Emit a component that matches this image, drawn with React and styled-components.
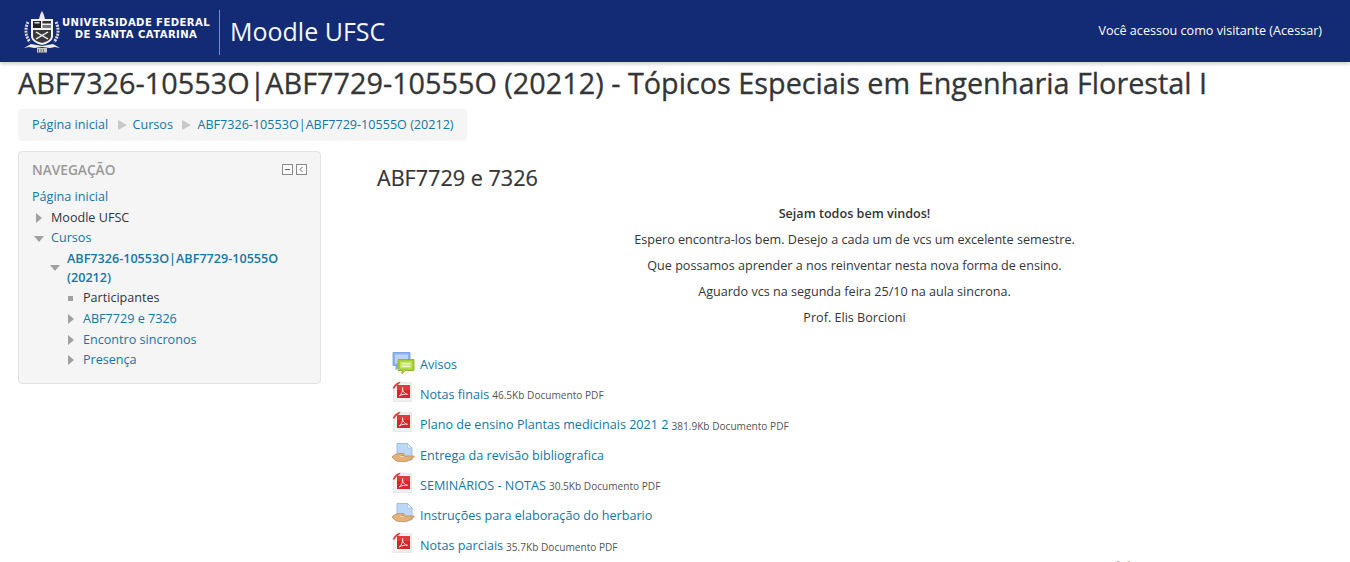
import React from 'react';
import styled, { createGlobalStyle } from 'styled-components';

const GlobalStyle = createGlobalStyle`
  html, body {
    margin: 0;
    padding: 0;
    background: #fff;
    height: 562px;
    overflow: hidden;
  }
  body {
    font-family: "Open Sans", "Liberation Sans", sans-serif;
    font-size: 12.6px;
    color: #333537;
  }
  * { box-sizing: border-box; }
`;

const Page = styled.div`
  height: 562px;
  overflow: hidden;
`;

const Header = styled.header`
  height: 62px;
  background: #132a74;
  box-shadow: 0 2px 4px rgba(0, 0, 0, 0.2);
  display: flex;
  align-items: center;
  padding: 0 28px 0 24px;
  color: #fff;
`;

const Brand = styled.div`
  display: flex;
  align-items: center;
  height: 45px;
  margin-top: 2px;
`;

const UniName = styled.div`
  font-family: "DejaVu Sans", sans-serif;
  font-weight: 700;
  font-size: 10.1px;
  line-height: 12px;
  letter-spacing: 0.4px;
  text-align: center;
  margin-left: 2px;
  margin-top: -6px;
  width: 148px;
  white-space: nowrap;
`;

const Divider = styled.div`
  width: 1px;
  height: 45px;
  background: #4a9fd6;
  margin: 0 10px 0 9px;
`;

const SiteName = styled.div`
  font-size: 25px;
  line-height: 30px;
  margin-top: -2px;
  color: #f4f6fb;
`;

const LoginInfo = styled.div`
  margin-left: auto;
  font-size: 12.6px;
  margin-top: -2px;
`;

const Content = styled.main`
  padding: 0 18px;
`;

const PageTitle = styled.h1`
  margin: 3px 0 0;
  font-size: 28.8px;
  line-height: 36px;
  font-weight: 400;
  -webkit-text-stroke: 0.3px #333537;
  color: #333537;
  white-space: nowrap;
`;

const Breadcrumb = styled.nav`
  display: inline-flex;
  align-items: center;
  height: 32px;
  margin-top: 8px;
  padding: 0 13px 1px 14px;
  background: #f5f5f5;
  border-radius: 4px;
  vertical-align: top;
`;

const Crumb = styled.a`
  color: #1177a5;
`;

const CrumbSep = styled.span`
  width: 0;
  height: 0;
  margin: 0 6px 0 9.5px;
  border-style: solid;
  border-width: 5px 0 5px 9px;
  border-color: transparent transparent transparent #c8c8c8;
`;

const Columns = styled.div`
  display: flex;
  align-items: flex-start;
  margin-top: 10px;
`;

const Block = styled.aside`
  width: 303px;
  height: 233px;
  flex: none;
  background: #f5f5f5;
  border: 1px solid #e3e3e3;
  border-radius: 4px;
  padding: 7px 13px 0;
`;

const BlockHead = styled.div`
  display: flex;
  align-items: center;
  justify-content: space-between;
  height: 20px;
  margin-bottom: 8px;
`;

const BlockTitle = styled.div`
  font-size: 13.7px;
  font-weight: 600;
  color: #999;
`;

const BlockControls = styled.div`
  display: flex;
  gap: 3px;
`;

const Ctrl = styled.span`
  width: 11px;
  height: 11px;
  border: 1px solid #8a8a8a;
  background: #fafafa;
  display: flex;
  align-items: center;
  justify-content: center;
`;

const Tree = styled.ul`
  list-style: none;
  margin: 0;
  padding: 0;
`;

const TreeItem = styled.li`
  display: flex;
  align-items: ${p => (p.$wrap ? 'flex-start' : 'center')};
  min-height: 20.7px;
  line-height: 18.5px;
  padding-left: ${p => p.$indent || 0}px;
  padding-top: ${p => (p.$wrap ? 1 : 0)}px;
  padding-bottom: ${p => (p.$wrap ? 1 : 0)}px;
`;

const Marker = styled.span`
  flex: none;
  width: 19px;
  height: 18px;
  display: flex;
  align-items: center;
  margin-top: ${p => (p.$wrap ? 9 : 0)}px;
`;

const ArrowRight = styled.span`
  width: 0;
  height: 0;
  margin-left: 4px;
  border-style: solid;
  border-width: 5px 0 5px 6px;
  border-color: transparent transparent transparent #a0a0a0;
`;

const ArrowDown = styled.span`
  width: 0;
  height: 0;
  margin-left: 2px;
  border-style: solid;
  border-width: 6px 5px 0 5px;
  border-color: #a0a0a0 transparent transparent transparent;
`;

const Square = styled.span`
  width: 5px;
  height: 5px;
  margin-left: 4px;
  background: #a0a0a0;
`;

const TreeLink = styled.a`
  color: ${p => (p.$plain ? '#333537' : '#1177a5')};
  font-weight: ${p => (p.$bold ? 600 : 400)};
`;

const Main = styled.section`
  flex: 1;
  min-width: 0;
  padding-left: 56px;
`;

const SectionTitle = styled.h3`
  margin: 13px 0 0;
  font-size: 21.6px;
  line-height: 28px;
  font-weight: 400;
  -webkit-text-stroke: 0.2px #333537;
  color: #333537;
`;

const Summary = styled.div`
  margin-top: 9px;
  text-align: center;
`;

const SummaryLine = styled.p`
  margin: 0;
  line-height: 26px;
  font-weight: ${p => (p.$bold ? 600 : 400)};
`;

const Activities = styled.ul`
  list-style: none;
  margin: 18px 0 0;
  padding: 0 0 0 14px;
`;

const Activity = styled.li`
  display: flex;
  align-items: center;
  height: 30.3px;
  white-space: nowrap;
`;

const ActivityIcon = styled.span`
  flex: none;
  width: 24px;
  height: 24px;
  margin-right: 5px;
  margin-top: -3px;
  display: block;
`;

const ActivityLink = styled.a`
  color: #1177a5;
`;

const ActivityMeta = styled.span`
  font-size: 10.1px;
  color: #555;
  margin-left: 3px;
  margin-top: 2px;
`;

const NextLabel = styled.div`
  margin: -4px 0 0 638px;
  font-size: 20px;
  line-height: 24px;
  color: #aaa;
  white-space: nowrap;
`;

function Crest() {
  return (
    <svg width="36" height="42" viewBox="0 0 36 42" style={{ flex: 'none' }}>
      <path d="M18 0l1.6 3 1.4 5h-6l1.4-5z" fill="#e8e8e8" />
      <path d="M4 11C1 17 1 25 6 31" fill="none" stroke="#ddd" strokeWidth="3" strokeDasharray="2 1" />
      <path d="M32 11c3 6 3 14-2 20" fill="none" stroke="#ddd" strokeWidth="3" strokeDasharray="2 1" />
      <path d="M7 8h22v17c0 5-6 8-11 9-5-1-11-4-11-9z" fill="#f2f2f2" />
      <rect x="9" y="10" width="8" height="7" fill="#222" />
      <rect x="10.5" y="11" width="5" height="1.5" fill="#ddd" />
      <rect x="18.5" y="10" width="8.5" height="2.5" fill="#333" />
      <rect x="18.5" y="14" width="8.5" height="3" fill="#777" />
      <path d="M9 19h18v6c0 4-5 6-9 7-4-1-9-3-9-7z" fill="#3a3a3a" />
      <path d="M12 21l12 7M24 21l-12 7" stroke="#fff" strokeWidth="1.4" />
      <path d="M0 37l7-4 11 2 11-2 7 4-5-1-5 1-8-1-8 1-5-1z" fill="#eee" />
      <rect x="13" y="37" width="10" height="4.5" fill="#c8c8c8" />
      <path d="M14.5 38v3M17 38v3M19.5 38v3" stroke="#444" strokeWidth="0.7" />
    </svg>
  );
}

function PdfIcon() {
  return (
    <svg width="24" height="24" viewBox="0 0 24 24">
      <path d="M2 7l7-6h12v20H2z" fill="#e9e9e9" />
      <path d="M3.5 8l6-5.5h10v17h-16z" fill="#f4f4f4" />
      <rect x="6" y="4" width="13" height="13" fill="#d8252b" />
      <path d="M6 4h13v5H6z" fill="#e8484b" opacity="0.6" />
      <path d="M1.5 7.5C3 4 5.5 1.5 9.5 0.5 9 2 8 3 6.5 4 5 5 4 6 3.5 7.5z" fill="#e33a3d" />
      <path d="M8 15c2.5-1.500 4-5 3.600-8.500-.4 3 1.500 6 5 6.800-3-.4-6 .2-8.600 1.700z" fill="none" stroke="#fbe1e1" strokeWidth="1" />
    </svg>
  );
}

function ForumIcon() {
  return (
    <svg width="24" height="24" viewBox="0 0 24 24">
      <path d="M2 1.5h17v13H9l-4 4v-4H2z" fill="#8db4f0" stroke="#6f97e2" strokeWidth="0.8" />
      <path d="M4 3.5h13v9H4z" fill="#bdd3f7" />
      <path d="M7 8.5h16v11H14l-3 3.500v-3.500H7z" fill="#a4cf2f" stroke="#86b41c" strokeWidth="0.8" />
      <path d="M9 10.5h12v7H9z" fill="#c3e266" />
      <path d="M11 12.8h8M11 15.4h8" stroke="#f2f9d8" strokeWidth="1.3" />
    </svg>
  );
}

function AssignIcon() {
  return (
    <svg width="24" height="24" viewBox="0 0 24 24">
      <path d="M6 1.5h10.500l4.500 4.500v12H6z" fill="#bcd7f7" stroke="#8fb5e6" strokeWidth="0.8" />
      <path d="M16.5 1.5V6H21z" fill="#eaf3fc" stroke="#8fb5e6" strokeWidth="0.5" />
      <path d="M1 15c2-2.500 5-3.500 8-3.500h3c1.500 0 2 1.500 .5 2l-2 .5h12c.8 0 1 .8.3 1.300l-5 3.200c-1 .6-2 1-3.300 1H8c-2.500 0-5-2-7-4.500z" fill="#e3b27a" stroke="#b98447" strokeWidth="0.7" />
      <path d="M9 14.5h4" stroke="#f4d7ad" strokeWidth="1" />
    </svg>
  );
}

const activities = [
  { icon: ForumIcon, name: 'Avisos' },
  { icon: PdfIcon, name: 'Notas finais', meta: '46.5Kb Documento PDF' },
  { icon: PdfIcon, name: 'Plano de ensino Plantas medicinais 2021 2', meta: '381.9Kb Documento PDF' },
  { icon: AssignIcon, name: 'Entrega da revisão bibliografica' },
  { icon: PdfIcon, name: 'SEMINÁRIOS - NOTAS', meta: '30.5Kb Documento PDF' },
  { icon: AssignIcon, name: 'Instruções para elaboração do herbario' },
  { icon: PdfIcon, name: 'Notas parciais', meta: '35.7Kb Documento PDF' },
];

const COURSE = 'ABF7326-10553O|ABF7729-10555O (20212)';

export default function App() {
  return (
    <Page>
      <GlobalStyle />
      <Header>
        <Brand>
          <Crest />
          <UniName>
            UNIVERSIDADE FEDERAL
            <br />
            DE SANTA CATARINA
          </UniName>
          <Divider />
          <SiteName>Moodle UFSC</SiteName>
        </Brand>
        <LoginInfo>Você acessou como visitante (Acessar)</LoginInfo>
      </Header>
      <Content>
        <PageTitle>{COURSE} - Tópicos Especiais em Engenharia Florestal I</PageTitle>
        <Breadcrumb>
          <Crumb>Página inicial</Crumb>
          <CrumbSep />
          <Crumb>Cursos</Crumb>
          <CrumbSep />
          <Crumb>{COURSE}</Crumb>
        </Breadcrumb>
        <Columns>
          <Block>
            <BlockHead>
              <BlockTitle>NAVEGAÇÃO</BlockTitle>
              <BlockControls>
                <Ctrl>
                  <svg width="7" height="7" viewBox="0 0 7 7"><path d="M1 3.5h5" stroke="#666" strokeWidth="1" /></svg>
                </Ctrl>
                <Ctrl>
                  <svg width="7" height="7" viewBox="0 0 7 7"><path d="M4.5 1L2 3.5 4.5 6" fill="none" stroke="#666" strokeWidth="1" /></svg>
                </Ctrl>
              </BlockControls>
            </BlockHead>
            <Tree>
              <TreeItem><TreeLink>Página inicial</TreeLink></TreeItem>
              <TreeItem><Marker><ArrowRight /></Marker><TreeLink $plain>Moodle UFSC</TreeLink></TreeItem>
              <TreeItem><Marker><ArrowDown /></Marker><TreeLink>Cursos</TreeLink></TreeItem>
              <TreeItem $indent={16} $wrap><Marker $wrap><ArrowDown /></Marker><TreeLink $bold>{COURSE}</TreeLink></TreeItem>
              <TreeItem $indent={32}><Marker><Square /></Marker><TreeLink $plain>Participantes</TreeLink></TreeItem>
              <TreeItem $indent={32}><Marker><ArrowRight /></Marker><TreeLink>ABF7729 e 7326</TreeLink></TreeItem>
              <TreeItem $indent={32}><Marker><ArrowRight /></Marker><TreeLink>Encontro sincronos</TreeLink></TreeItem>
              <TreeItem $indent={32}><Marker><ArrowRight /></Marker><TreeLink>Presença</TreeLink></TreeItem>
            </Tree>
          </Block>
          <Main>
            <SectionTitle>ABF7729 e 7326</SectionTitle>
            <Summary>
              <SummaryLine $bold>Sejam todos bem vindos!</SummaryLine>
              <SummaryLine>Espero encontra-los bem. Desejo a cada um de vcs um excelente semestre.</SummaryLine>
              <SummaryLine>Que possamos aprender a nos reinventar nesta nova forma de ensino.</SummaryLine>
              <SummaryLine>Aguardo vcs na segunda feira 25/10 na aula sincrona.</SummaryLine>
              <SummaryLine>Prof. Elis Borcioni</SummaryLine>
            </Summary>
            <Activities>
              {activities.map(a => (
                <Activity key={a.name}>
                  <ActivityIcon><a.icon /></ActivityIcon>
                  <ActivityLink>{a.name}</ActivityLink>
                  {a.meta && <ActivityMeta>{a.meta}</ActivityMeta>}
                </Activity>
              ))}
            </Activities>
            <NextLabel>Artigos e Vídeos</NextLabel>
          </Main>
        </Columns>
      </Content>
    </Page>
  );
}
